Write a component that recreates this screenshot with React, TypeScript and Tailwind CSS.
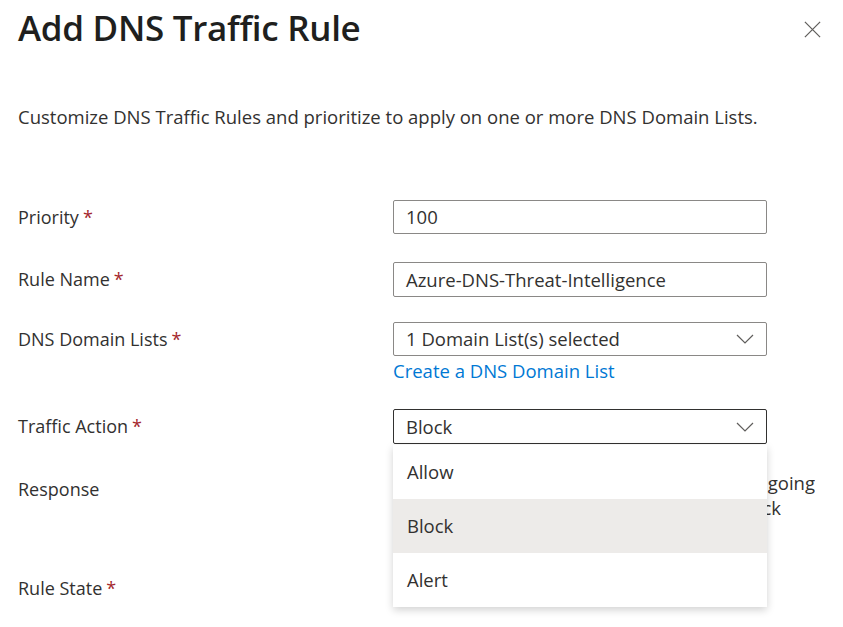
import React from 'react';

const font = { fontFamily: '"Open Sans", "Noto Sans", Arial, sans-serif' };

function Label({ text, required }: { text: string; required?: boolean }) {
	return (
		<div className="text-[18px] text-[#323130]">
			{text}
			{required && <span className="text-[#a4262c] ml-1">*</span>}
		</div>
	);
}

function Chevron() {
	return (
		<svg width="18" height="10" viewBox="0 0 18 10" fill="none" className="shrink-0">
			<path d="M1 1l8 8 8-8" stroke="#605e5c" strokeWidth="1.2" />
		</svg>
	);
}

export default function App() {
	const options = ['Allow', 'Block', 'Alert'];
	const selected = 'Block';

	return (
		<div className="w-[843px] h-[627px] bg-white overflow-hidden relative" style={font}>
			<div className="flex items-start justify-between pl-[18px] pr-[21px] pt-[5px]">
				<h1 className="text-[35px] leading-[46px] font-semibold text-[#201f1e] tracking-[-0.3px]">Add DNS Traffic Rule</h1>
				<svg width="19" height="19" viewBox="0 0 20 20" className="mt-[15px]">
					<path d="M2 2l16 16M18 2L2 18" stroke="#605e5c" strokeWidth="1.3" />
				</svg>
			</div>

			<p className="pl-[18px] mt-[53px] text-[18.5px] leading-[26px] text-[#323130]">
				Customize DNS Traffic Rules and prioritize to apply on one or more DNS Domain Lists.
			</p>

			<div className="pl-[18px] mt-[70px] grid grid-cols-[375px_422px]">
				{/* Priority */}
				<div className="h-[34px] flex items-center"><Label text="Priority" required /></div>
				<div className="h-[34px] w-[374px] border border-[#8a8886] rounded-[2px] flex items-center px-3 text-[18.5px] text-[#323130]">100</div>

				{/* Rule name */}
				<div className="h-[35px] mt-[28px] flex items-center"><Label text="Rule Name" required /></div>
				<div className="h-[35px] mt-[28px] w-[374px] border border-[#8a8886] rounded-[2px] flex items-center px-3 text-[18.5px] text-[#323130]">
					Azure-DNS-Threat-Intelligence
				</div>

				{/* Domain lists */}
				<div className="h-[34px] mt-[25px] flex items-center"><Label text="DNS Domain Lists" required /></div>
				<div className="mt-[25px]">
					<div className="h-[34px] w-[374px] border border-[#8a8886] rounded-[2px] flex items-center justify-between pl-3 pr-[12px] text-[18.5px] text-[#323130]">
						<span>1 Domain List(s) selected</span>
						<Chevron />
					</div>
					<a className="block text-[18.5px] text-[#0078d4] leading-[30px]">Create a DNS Domain List</a>
				</div>

				{/* Traffic action */}
				<div className="h-[35px] mt-[23px] flex items-center"><Label text="Traffic Action" required /></div>
				<div className="mt-[23px] relative">
					<div className="h-[35px] w-[374px] border-[1.5px] border-[#323130] rounded-[2px] flex items-center justify-between pl-3 pr-[12px] text-[18.5px] text-[#323130]">
						<span>{selected}</span>
						<Chevron />
					</div>
					<ul className="absolute left-0 top-[36px] w-[374px] bg-white shadow-[0_3px_8px_rgba(0,0,0,0.18)] z-10">
						{options.map((opt) => (
							<li
								key={opt}
								className={`h-[54px] flex items-center px-[14px] text-[18.5px] text-[#323130] ${opt === selected ? 'bg-[#edebe9]' : ''}`}
							>
								{opt}
							</li>
						))}
					</ul>
				</div>

				{/* Response */}
				<div className="mt-[33px] leading-[25px]"><Label text="Response" /></div>
				<div className="mt-[26px] text-[18.5px] text-[#323130] leading-[25px]">
					<div className="w-[422px] whitespace-nowrap overflow-hidden flex justify-end">
						<span><span className="text-[#a4262c]">*</span> Block the query and drop ongoing</span>
					</div>
					<div className="w-[388px] whitespace-nowrap overflow-hidden flex justify-end">
						<span>requests, then log the block</span>
					</div>
				</div>

				{/* Rule state */}
				<div className="mt-[55px]"><Label text="Rule State" required /></div>
				<div className="mt-[55px]" />
			</div>
		</div>
	);
}
